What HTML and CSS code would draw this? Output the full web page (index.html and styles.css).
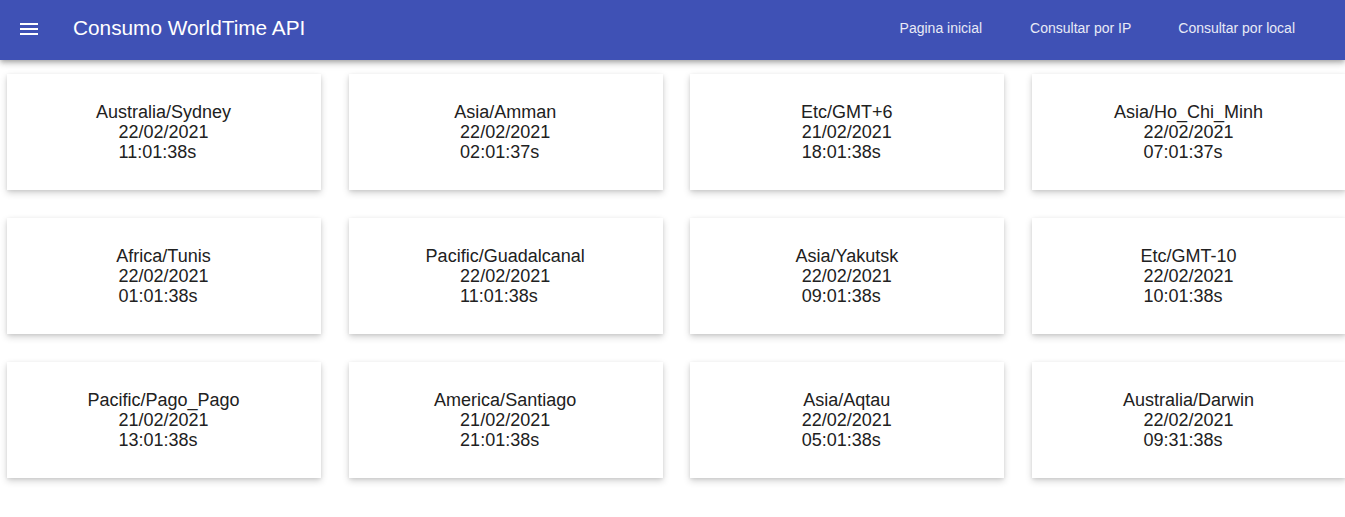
FILE: index.html
```html
<!DOCTYPE html>
<html lang="pt">
<head>
<meta charset="utf-8">
<title>Consumo WorldTime API</title>
<link rel="stylesheet" href="styles.css">
</head>
<body>
<header class="toolbar">
  <button class="menu-btn" aria-label="menu">
    <svg width="18" height="12" viewBox="0 0 18 12"><rect x="0" y="0" width="18" height="2" fill="#fff"/><rect x="0" y="5" width="18" height="2" fill="#fff"/><rect x="0" y="10" width="18" height="2" fill="#fff"/></svg>
  </button>
  <span class="title">Consumo WorldTime API</span>
  <nav class="nav">
    <a class="nav-link">Pagina inicial</a>
    <a class="nav-link">Consultar por IP</a>
    <a class="nav-link">Consultar por local</a>
  </nav>
</header>
<main class="grid">
  <div class="card"><div class="zone">Australia/Sydney</div><div class="dt"><div>22/02/2021</div><div>11:01:38s</div></div></div>
  <div class="card"><div class="zone">Asia/Amman</div><div class="dt"><div>22/02/2021</div><div>02:01:37s</div></div></div>
  <div class="card"><div class="zone">Etc/GMT+6</div><div class="dt"><div>21/02/2021</div><div>18:01:38s</div></div></div>
  <div class="card"><div class="zone">Asia/Ho_Chi_Minh</div><div class="dt"><div>22/02/2021</div><div>07:01:37s</div></div></div>
  <div class="card"><div class="zone">Africa/Tunis</div><div class="dt"><div>22/02/2021</div><div>01:01:38s</div></div></div>
  <div class="card"><div class="zone">Pacific/Guadalcanal</div><div class="dt"><div>22/02/2021</div><div>11:01:38s</div></div></div>
  <div class="card"><div class="zone">Asia/Yakutsk</div><div class="dt"><div>22/02/2021</div><div>09:01:38s</div></div></div>
  <div class="card"><div class="zone">Etc/GMT-10</div><div class="dt"><div>22/02/2021</div><div>10:01:38s</div></div></div>
  <div class="card"><div class="zone">Pacific/Pago_Pago</div><div class="dt"><div>21/02/2021</div><div>13:01:38s</div></div></div>
  <div class="card"><div class="zone">America/Santiago</div><div class="dt"><div>21/02/2021</div><div>21:01:38s</div></div></div>
  <div class="card"><div class="zone">Asia/Aqtau</div><div class="dt"><div>22/02/2021</div><div>05:01:38s</div></div></div>
  <div class="card"><div class="zone">Australia/Darwin</div><div class="dt"><div>22/02/2021</div><div>09:31:38s</div></div></div>
</main>
</body>
</html>
```
FILE: styles.css
```css
html, body {
  margin: 0;
  padding: 0;
  background: #fff;
  font-family: "Liberation Sans", Arial, sans-serif;
}
body {
  overflow: hidden;
  height: 517px;
}
.toolbar {
  height: 56px;
  padding: 0 50px 4px 20px;
  background: #3f51b5;
  color: #fff;
  display: flex;
  align-items: center;
  box-shadow: 0 2px 4px -1px rgba(0,0,0,.2), 0 4px 5px 0 rgba(0,0,0,.14), 0 1px 10px 0 rgba(0,0,0,.12);
  position: relative;
  z-index: 2;
}
.menu-btn {
  background: none;
  border: 0;
  padding: 0;
  width: 18px;
  height: 12px;
  display: flex;
  margin-top: 2px;
}
.title {
  font-size: 20.8px;
  margin-left: 35px;
}
.nav {
  margin-left: auto;
  display: flex;
  gap: 47px;
}
.nav-link {
  font-size: 14px;
  color: #e8eaf6;
}
.nav-link:first-child {
  margin-right: 1px;
}
.grid {
  display: grid;
  grid-template-columns: repeat(4, 314px);
  column-gap: 27.67px;
  row-gap: 28px;
  padding: 14px 0 0 7px;
  width: 1400px;
}
.card {
  height: 116px;
  background: #fff;
  box-shadow: 0 3px 7px rgba(0,0,0,.18), 0 1px 3px rgba(0,0,0,.08);
  display: flex;
  flex-direction: column;
  align-items: center;
  justify-content: center;
  font-size: 18px;
  line-height: 20px;
  color: #212121;
}
.zone {
  margin-left: -1px;
}
.dt {
  text-align: left;
  margin-left: -1px;
}
```
